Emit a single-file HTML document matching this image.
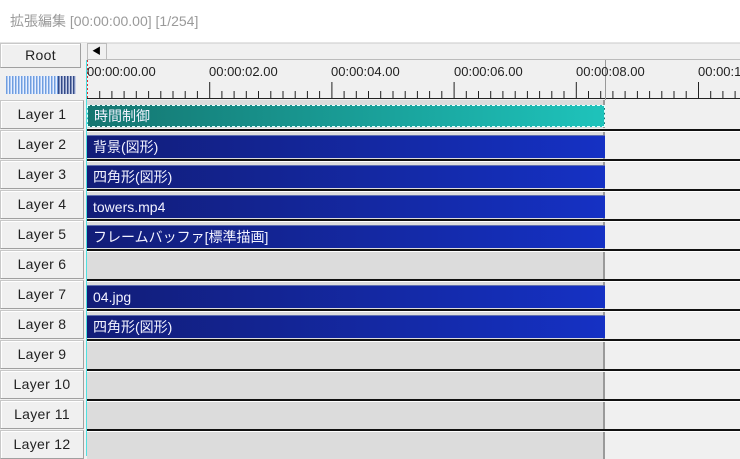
<!DOCTYPE html>
<html><head><meta charset="utf-8"><style>
*{margin:0;padding:0;box-sizing:border-box}
body{width:740px;height:456px;overflow:hidden;background:#f0f0f0;position:relative;font-family:"Liberation Sans","Noto Sans CJK JP",sans-serif}
.a{position:absolute}
.title{left:0;top:0;width:740px;height:42px;background:#fff;color:#9a9a9a;font-size:14px;padding:11px 0 0 10px}
.btn{position:absolute;left:0;width:84px;height:29px;background:#f0f0f0;border:1px solid #c8c8c8;border-right-color:#a0a0a0;border-bottom-color:#a0a0a0;box-shadow:inset 1px 1px #fff;font-size:14px;color:#222;text-align:center;line-height:27px;letter-spacing:.3px}
.row{position:absolute;left:87px;width:653px;height:30px;border-top:2px solid #111}
.row .w{position:absolute;left:0;top:0;width:653px;height:1px;background:#fff}
.row .g{position:absolute;left:0;top:1px;width:518px;height:27px;background:#dcdcdc;border-right:2px solid #9a9a9a}
.clip{position:absolute;left:0;top:4px;width:518px;height:23px;color:#f2f2ff;font-size:14px;line-height:23px;padding-left:6px;white-space:nowrap}
.blue{background:linear-gradient(90deg,#121d78,#1531c4);border-top:1px solid #6070b0}
.teal{background:linear-gradient(90deg,#147570,#1ec3bb);border:1px dashed #e0ffff}
.lbl{position:absolute;top:64px;font-size:13px;color:#222}
</style></head><body>
<div class="a title">拡張編集 [00:00:00.00] [1/254]</div>
<div class="a" style="left:0;top:42px;width:740px;height:1px;background:#e4e4e4"></div>
<div class="btn" style="top:43px;width:81px;height:25px;line-height:23px">Root</div>
<div class="a" style="left:6px;top:76px;width:70px;height:18px;background:repeating-linear-gradient(90deg,#6f9ee0 0 1.5px,#e8f0ff 1.5px 3px)"></div>
<div class="a" style="left:58px;top:76px;width:18px;height:18px;background:repeating-linear-gradient(90deg,#334a88 0 1.5px,#c8d0e8 1.5px 3px)"></div>
<div class="a" style="left:87px;top:43px;width:20px;height:17px;border:1px solid #bbb;background:#f0f0f0;font-size:9px;line-height:15px;padding-left:4px">◀</div>
<div class="a" style="left:107px;top:43px;width:633px;height:17px;border-top:1px solid #ddd;border-bottom:1px solid #bbb;background:#f0f0f0"></div>
<div class="a" style="left:87px;top:60px;width:653px;height:40px;background:#f0f0f0"></div>
<div class="a" style="left:87px;top:98px;width:653px;height:1px;background:#222"></div>
<svg class="a" style="left:87px;top:60px" width="653" height="40">
<g stroke="#222" stroke-width="1">
<path d="M12.7 31V38M24.9 31V38M37.1 31V38M49.3 31V38M61.6 31V38M73.8 31V38M86 31V38M98.2 31V38M110.4 31V38M122.7 22V38M134.9 31V38M147.1 31V38M159.3 31V38M171.5 31V38M183.8 31V38M196 31V38M208.2 31V38M220.4 31V38M232.6 31V38M244.9 22V38M257.1 31V38M269.3 31V38M281.5 31V38M293.7 31V38M306 31V38M318.2 31V38M330.4 31V38M342.6 31V38M354.8 31V38M367.1 22V38M379.3 31V38M391.5 31V38M403.7 31V38M415.9 31V38M428.2 31V38M440.4 31V38M452.6 31V38M464.8 31V38M477 31V38M489.3 22V38M501.5 31V38M513.7 31V38M525.9 31V38M538.1 31V38M550.4 31V38M562.6 31V38M574.8 31V38M587 31V38M599.2 31V38M611.5 22V38M623.7 31V38M635.9 31V38M648.1 31V38"/>
</g>
<line x1="518.5" y1="0" x2="518.5" y2="40" stroke="#999"/>
<line x1="0.5" y1="0" x2="0.5" y2="40" stroke="#d33" stroke-dasharray="2,2"/>
</svg>
<div class="lbl" style="left:87px">00:00:00.00</div>
<div class="lbl" style="left:209px">00:00:02.00</div>
<div class="lbl" style="left:331px">00:00:04.00</div>
<div class="lbl" style="left:454px">00:00:06.00</div>
<div class="lbl" style="left:576px">00:00:08.00</div>
<div class="lbl" style="left:698px">00:00:10.00</div>

<div class="btn" style="top:100px">Layer 1</div>
<div class="btn" style="top:130px">Layer 2</div>
<div class="btn" style="top:160px">Layer 3</div>
<div class="btn" style="top:190px">Layer 4</div>
<div class="btn" style="top:220px">Layer 5</div>
<div class="btn" style="top:250px">Layer 6</div>
<div class="btn" style="top:280px">Layer 7</div>
<div class="btn" style="top:310px">Layer 8</div>
<div class="btn" style="top:340px">Layer 9</div>
<div class="btn" style="top:370px">Layer 10</div>
<div class="btn" style="top:400px">Layer 11</div>
<div class="btn" style="top:430px">Layer 12</div>

<div class="row" style="top:98px;border-top:0"><div class="g" style="top:2px;height:28px"></div><div class="clip teal" style="top:7px;height:22px;line-height:20px">時間制御</div></div>
<div class="row" style="top:129px"><div class="w"></div><div class="g"></div><div class="clip blue">背景(図形)</div></div>
<div class="row" style="top:159px"><div class="w"></div><div class="g"></div><div class="clip blue">四角形(図形)</div></div>
<div class="row" style="top:189px"><div class="w"></div><div class="g"></div><div class="clip blue">towers.mp4</div></div>
<div class="row" style="top:219px"><div class="w"></div><div class="g"></div><div class="clip blue">フレームバッファ[標準描画]</div></div>
<div class="row" style="top:249px"><div class="w"></div><div class="g"></div></div>
<div class="row" style="top:279px"><div class="w"></div><div class="g"></div><div class="clip blue">04.jpg</div></div>
<div class="row" style="top:309px"><div class="w"></div><div class="g"></div><div class="clip blue">四角形(図形)</div></div>
<div class="row" style="top:339px"><div class="w"></div><div class="g"></div></div>
<div class="row" style="top:369px"><div class="w"></div><div class="g"></div></div>
<div class="row" style="top:399px"><div class="w"></div><div class="g"></div></div>
<div class="row" style="top:429px"><div class="w"></div><div class="g"></div></div>
<div class="a" style="left:86px;top:60px;width:1px;height:396px;background:#4ee0e0"></div>
</body></html>
